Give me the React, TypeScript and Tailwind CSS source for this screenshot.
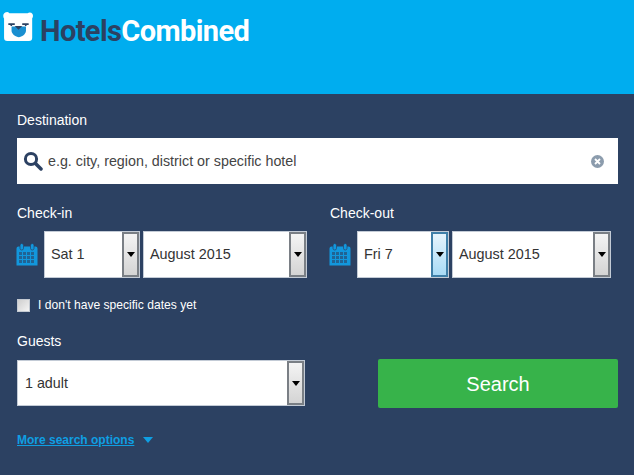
const Arrow = ({ active }: { active?: boolean }) => (
  <div className={`flex w-[17px] h-full shrink-0 items-center justify-center border-2 ${active ? "border-[#3f7fa8] bg-gradient-to-b from-[#e6f4fc] to-[#a9dbf6]" : "border-[#7a7f85] bg-gradient-to-b from-[#f4f4f4] to-[#d4d4d4]"}`}>
    <svg width="8" height="5" viewBox="0 0 8 5"><path d="M0 0h8L4 5z" fill="#000" /></svg>
  </div>
);

const Select = ({ value, width, active }: { value: string; width: string; active?: boolean }) => (
  <div className={`flex ${width} h-[47px] items-center justify-between bg-white border border-[#c3cbd6] shrink-0`}>
    <span className="pl-[6px] pt-[1px] text-[14.4px] text-[#333]">{value}</span>
    <Arrow active={active} />
  </div>
);

const Calendar = () => (
  <svg width="22" height="23" viewBox="0 0 22 23" className="-ml-[1px] shrink-0">
    <path d="M0.500 5.500a2 2 0 0 1 2-2h17a2 2 0 0 1 2 2V22.500H0.500z" fill="#1297dd" />
    <rect x="4" y="0.500" width="3.500" height="6.500" rx="1.700" fill="#1297dd" stroke="#2c4162" strokeWidth="0.700" />
    <rect x="14.500" y="0.500" width="3.500" height="6.500" rx="1.700" fill="#1297dd" stroke="#2c4162" strokeWidth="0.700" />
    <g fill="#2c4162">
      {[9, 13, 17].map((y) =>
        [3, 7, 11, 15].map((x) => <rect key={`${x}-${y}`} x={x} y={y} width="3" height="3" opacity="0.6" />)
      )}
    </g>
  </svg>
);

export default function App() {
  return (
    <div className="h-[475px] w-[634px] overflow-hidden bg-[#2c4162] font-['Liberation_Sans',Arial,sans-serif]">
      <header className="flex h-[94px] items-start bg-[#00adef] pl-[3px] pt-[11px]">
        <svg width="31" height="31" viewBox="1 1.500 29 28" className="shrink-0">
          <path d="M3 2.500a3 3 0 0 1 4 .7h17a3 3 0 0 1 5 2.600c0 1-.5 1.500-.7 2V26a3 3 0 0 1-3 3H5a3 3 0 0 1-3-3V8c-1-1.500-1.300-4 1-5.500z" fill="#fff" />
          <path d="M9 15.500h13.500v4c0 3-4 6-6.700 6s-6.800-3-6.800-6z" fill="#1a8fd0" />
          <path d="M6 12.500h6v1.500H9.500v1H8v-1H6zM19 12.500h6v1.500h-2v1h-1.500v-1H19z" fill="#2c4162" />
          <path d="M12 15h7l-3.500 3.500z" fill="#2c4162" />
        </svg>
        <div className="ml-[6px] mt-[0px] font-['Roboto',sans-serif] text-[29px] font-bold leading-[40px] tracking-[-0.6px]">
          <span className="text-[#2c4162]">Hotels</span>
          <span className="text-white">Combined</span>
        </div>
      </header>

      <main className="px-[17px] pt-[17px]">
        <label className="block text-[14px] leading-[18px] text-white">Destination</label>
        <div className="mt-[9px] flex h-[46px] w-[601px] items-center bg-white">
          <svg width="20" height="20" viewBox="0 0 20 20" className="ml-[6px] shrink-0">
            <circle cx="8" cy="8" r="5.600" fill="none" stroke="#2c4162" strokeWidth="3" />
            <path d="M12.500 12.500 18 18" stroke="#2c4162" strokeWidth="3.500" strokeLinecap="round" />
          </svg>
          <span className="ml-[5px] flex-1 pt-[1px] text-[14.3px] text-[#444]">e.g. city, region, district or specific hotel</span>
          <svg width="13" height="13" viewBox="0 0 13 13" className="mr-[14px]">
            <circle cx="6.500" cy="6.500" r="6.500" fill="#8c9cad" />
            <path d="M4 4l5 5M9 4l-5 5" stroke="#fff" strokeWidth="1.800" />
          </svg>
        </div>

        <div className="mt-[20px] flex">
          <div className="w-[313px] shrink-0">
            <div className="text-[14px] leading-[18px] text-white">Check-in</div>
            <div className="mt-[9px] flex items-center">
              <Calendar />
              <div className="ml-[6px]"><Select value="Sat 1" width="w-[96px]" /></div>
              <div className="ml-[3px]"><Select value="August 2015" width="w-[164px]" /></div>
            </div>
          </div>
          <div>
            <div className="text-[14px] leading-[18px] text-white">Check-out</div>
            <div className="mt-[9px] flex items-center">
              <Calendar />
              <div className="ml-[6px]"><Select value="Fri 7" width="w-[92px]" active /></div>
              <div className="ml-[3px]"><Select value="August 2015" width="w-[159px]" /></div>
            </div>
          </div>
        </div>

        <div className="mt-[20px] flex items-center">
          <div className="h-[13px] w-[13px] border border-[#c3c9d1] bg-gradient-to-br from-[#cfcfcf] to-[#f4f4f4]" />
          <span className="ml-[8px] text-[12.1px] leading-[14px] text-white">I don't have specific dates yet</span>
        </div>

        <div className="mt-[20px] text-[14px] leading-[18px] text-white">Guests</div>
        <div className="mt-[9px] flex items-start">
          <div className="mt-[1px] flex h-[46px] w-[288px] shrink-0 items-center justify-between border border-[#c3cbd6] bg-white">
            <span className="pl-[7px] pt-[1px] text-[14.3px] text-[#333]">1 adult</span>
            <Arrow />
          </div>
          <button className="ml-[73px] h-[49px] w-[240px] shrink-0 rounded-[2px] bg-[#37b34a] text-[20px] text-white">Search</button>
        </div>

        <div className="mt-[24px] flex items-center">
          <a className="text-[12px] font-bold leading-[16px] text-[#0f9fe3] underline">More search options</a>
          <svg width="10" height="6" viewBox="0 0 10 6" className="ml-[9px]"><path d="M0 0h10L5 6z" fill="#0f9fe3" /></svg>
        </div>
      </main>
    </div>
  );
}
